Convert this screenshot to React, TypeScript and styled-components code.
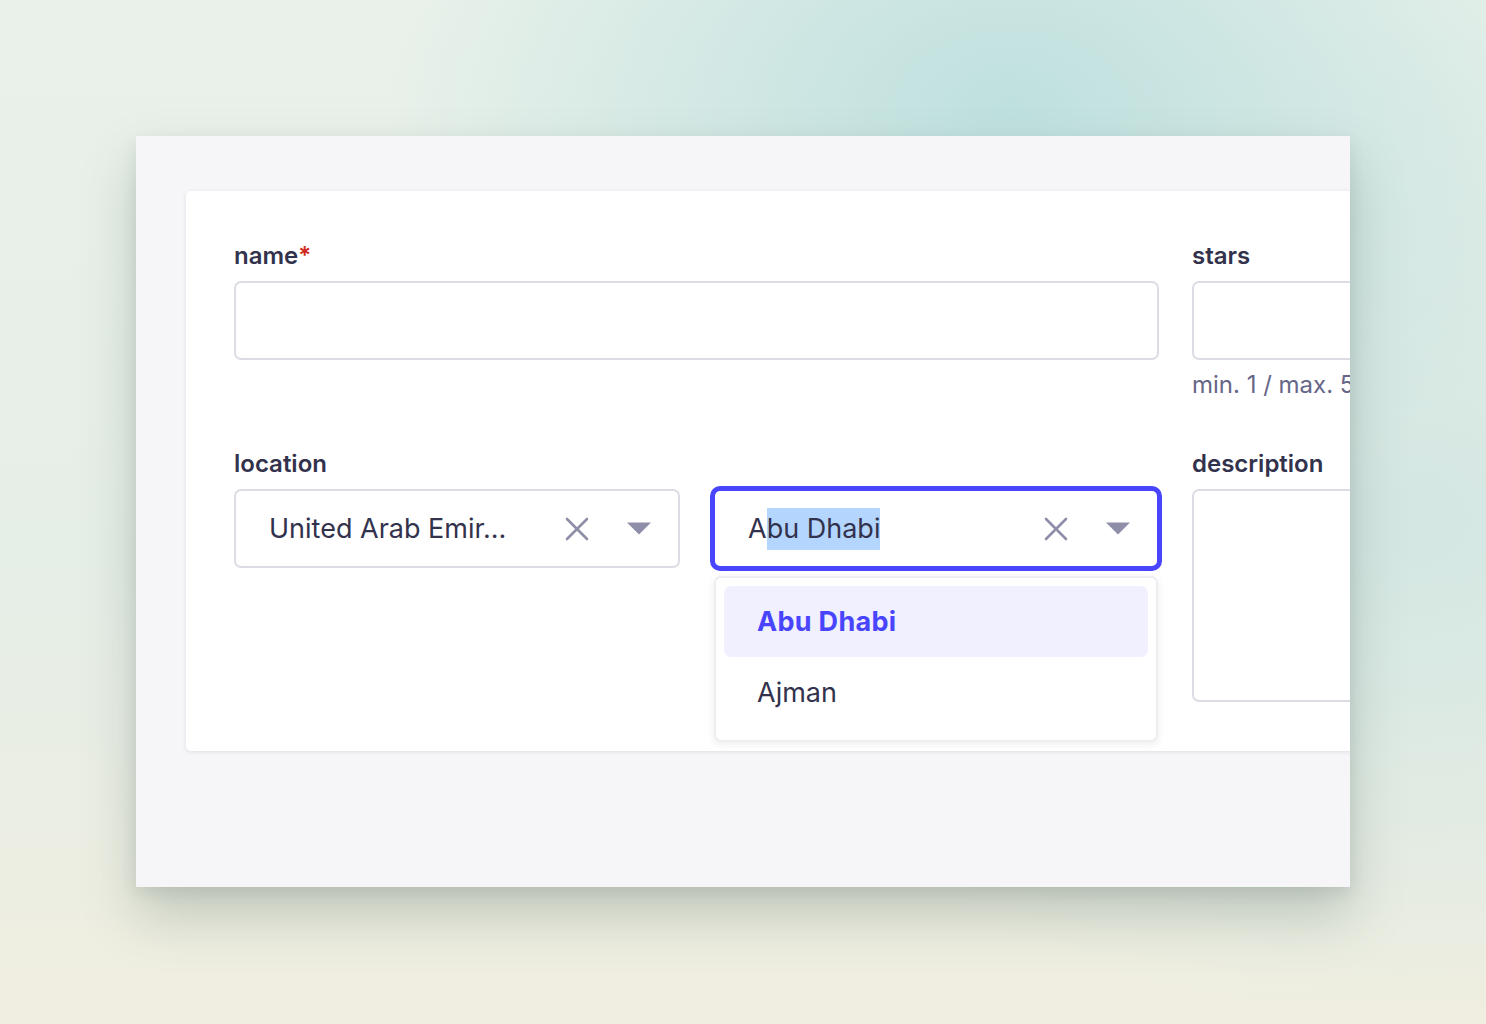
import React from "react";
import styled, { createGlobalStyle } from "styled-components";

const GlobalStyle = createGlobalStyle`
  html, body {
    margin: 0;
    padding: 0;
  }
  body {
    width: 1486px;
    height: 1024px;
    overflow: hidden;
    font-family: Inter, "Noto Sans", "Liberation Sans", sans-serif;
    background:
      radial-gradient(ellipse 620px 420px at 1010px 110px, rgba(190, 224, 223, 1), rgba(190, 224, 223, 0)),
      radial-gradient(ellipse 700px 500px at 1400px 520px, rgba(210, 230, 226, 0.9), rgba(210, 230, 226, 0)),
      linear-gradient(180deg, #e9f1ea 0%, #e5eee7 55%, #f0eee0 100%);
  }
`;

const Stage = styled.div`
  padding: 136px 0 0 136px;
`;

const Window = styled.div`
  width: 1214px;
  height: 751px;
  box-sizing: border-box;
  overflow: hidden;
  background: #f6f6f9;
  padding: 55px 0 0 50px;
  box-shadow: 0 28px 50px rgba(80, 100, 90, 0.28), 0 6px 14px rgba(80, 100, 90, 0.12);
`;

const Card = styled.div`
  width: 1500px;
  box-sizing: border-box;
  background: #ffffff;
  border-radius: 5px;
  padding: 49px 48px 49px;
  box-shadow: 0 1px 4px rgba(33, 33, 52, 0.1);
  display: flex;
  flex-direction: column;
  gap: 47px;
`;

const Row = styled.div`
  display: grid;
  grid-template-columns: repeat(12, 1fr);
  column-gap: 33px;
`;

const Field = styled.div<{ $span: number }>`
  grid-column: span ${(p) => p.$span};
  display: flex;
  flex-direction: column;
  min-width: 0;
`;

const Label = styled.label`
  font-size: 24px;
  line-height: 32px;
  font-weight: 600;
  color: #32324d;
  margin-bottom: 9px;
  white-space: nowrap;
`;

const Required = styled.span`
  color: #d02b20;
`;

const TextInput = styled.div`
  height: 79px;
  box-sizing: border-box;
  border: 2px solid #dcdce4;
  border-radius: 7px;
  background: #fff;
`;

const TextArea = styled(TextInput)`
  height: 213px;
`;

const Hint = styled.div`
  margin-top: 9px;
  font-size: 24px;
  line-height: 32px;
  color: #666687;
  white-space: nowrap;
`;

const SelectPair = styled.div`
  display: grid;
  grid-template-columns: 1fr 1fr;
  column-gap: 33px;
`;

const SelectWrap = styled.div`
  position: relative;
`;

const SelectBox = styled.div<{ $focused?: boolean }>`
  height: 79px;
  box-sizing: border-box;
  border: 2px solid ${(p) => (p.$focused ? "#4945ff" : "#dcdce4")};
  border-radius: 7px;
  background: #fff;
  display: flex;
  align-items: center;
  padding: 0 27px 0 33px;
  box-shadow: ${(p) => (p.$focused ? "0 0 0 3px #4945ff" : "none")};
`;

const Value = styled.div`
  flex: 1;
  min-width: 0;
  font-size: 27px;
  line-height: 42px;
  color: #32324d;
  white-space: nowrap;
  overflow: hidden;
`;

const Selected = styled.span`
  display: inline-block;
  line-height: 42px;
  background: #b4d5fe;
`;

const Icons = styled.div`
  display: flex;
  align-items: center;
  gap: 38px;
`;

const IconBtn = styled.span`
  display: flex;
  align-items: center;
  justify-content: center;
`;

const Menu = styled.div`
  position: absolute;
  top: 87px;
  left: 1px;
  right: 1px;
  background: #fff;
  border: 2px solid #eeeef2;
  border-radius: 7px;
  box-shadow: 0 2px 8px rgba(33, 33, 52, 0.08);
  padding: 8px 8px 12px;
  z-index: 2;
`;

const Option = styled.div<{ $active?: boolean }>`
  height: 71px;
  display: flex;
  align-items: center;
  padding: 0 33px;
  border-radius: 7px;
  font-size: 27px;
  font-weight: ${(p) => (p.$active ? 700 : 400)};
  letter-spacing: ${(p) => (p.$active ? "0.3px" : "0")};
  color: ${(p) => (p.$active ? "#4945ff" : "#32324d")};
  background: ${(p) => (p.$active ? "#f0f0ff" : "transparent")};
`;

const ClearIcon = () => (
  <svg width="24" height="24" viewBox="0 0 24 24">
    <path
      d="M2 2 L22 22 M22 2 L2 22"
      stroke="#8e8ea9"
      strokeWidth="2.6"
      strokeLinecap="round"
      fill="none"
    />
  </svg>
);

const CaretIcon = () => (
  <svg width="24" height="13" viewBox="0 0 24 13">
    <path d="M0 0.5 H24 L12 12.5 Z" fill="#8e8ea9" />
  </svg>
);

const Select: React.FC<{ focused?: boolean; children: React.ReactNode }> = ({
  focused,
  children,
}) => (
  <SelectBox $focused={focused}>
    <Value>{children}</Value>
    <Icons>
      <IconBtn>
        <ClearIcon />
      </IconBtn>
      <IconBtn>
        <CaretIcon />
      </IconBtn>
    </Icons>
  </SelectBox>
);

const App: React.FC = () => {
  return (
    <>
      <GlobalStyle />
      <Stage>
        <Window>
          <Card>
            <Row>
              <Field $span={8}>
                <Label>
                  name<Required>*</Required>
                </Label>
                <TextInput />
              </Field>
              <Field $span={4}>
                <Label>stars</Label>
                <TextInput />
                <Hint>min. 1 / max. 5</Hint>
              </Field>
            </Row>
            <Row>
              <Field $span={8}>
                <Label>location</Label>
                <SelectPair>
                  <SelectWrap>
                    <Select>United Arab Emir...</Select>
                  </SelectWrap>
                  <SelectWrap>
                    <Select focused>
                      A<Selected>bu Dhabi</Selected>
                    </Select>
                    <Menu>
                      <Option $active>Abu Dhabi</Option>
                      <Option>Ajman</Option>
                    </Menu>
                  </SelectWrap>
                </SelectPair>
              </Field>
              <Field $span={4}>
                <Label>description</Label>
                <TextArea />
              </Field>
            </Row>
          </Card>
        </Window>
      </Stage>
    </>
  );
};

export default App;
